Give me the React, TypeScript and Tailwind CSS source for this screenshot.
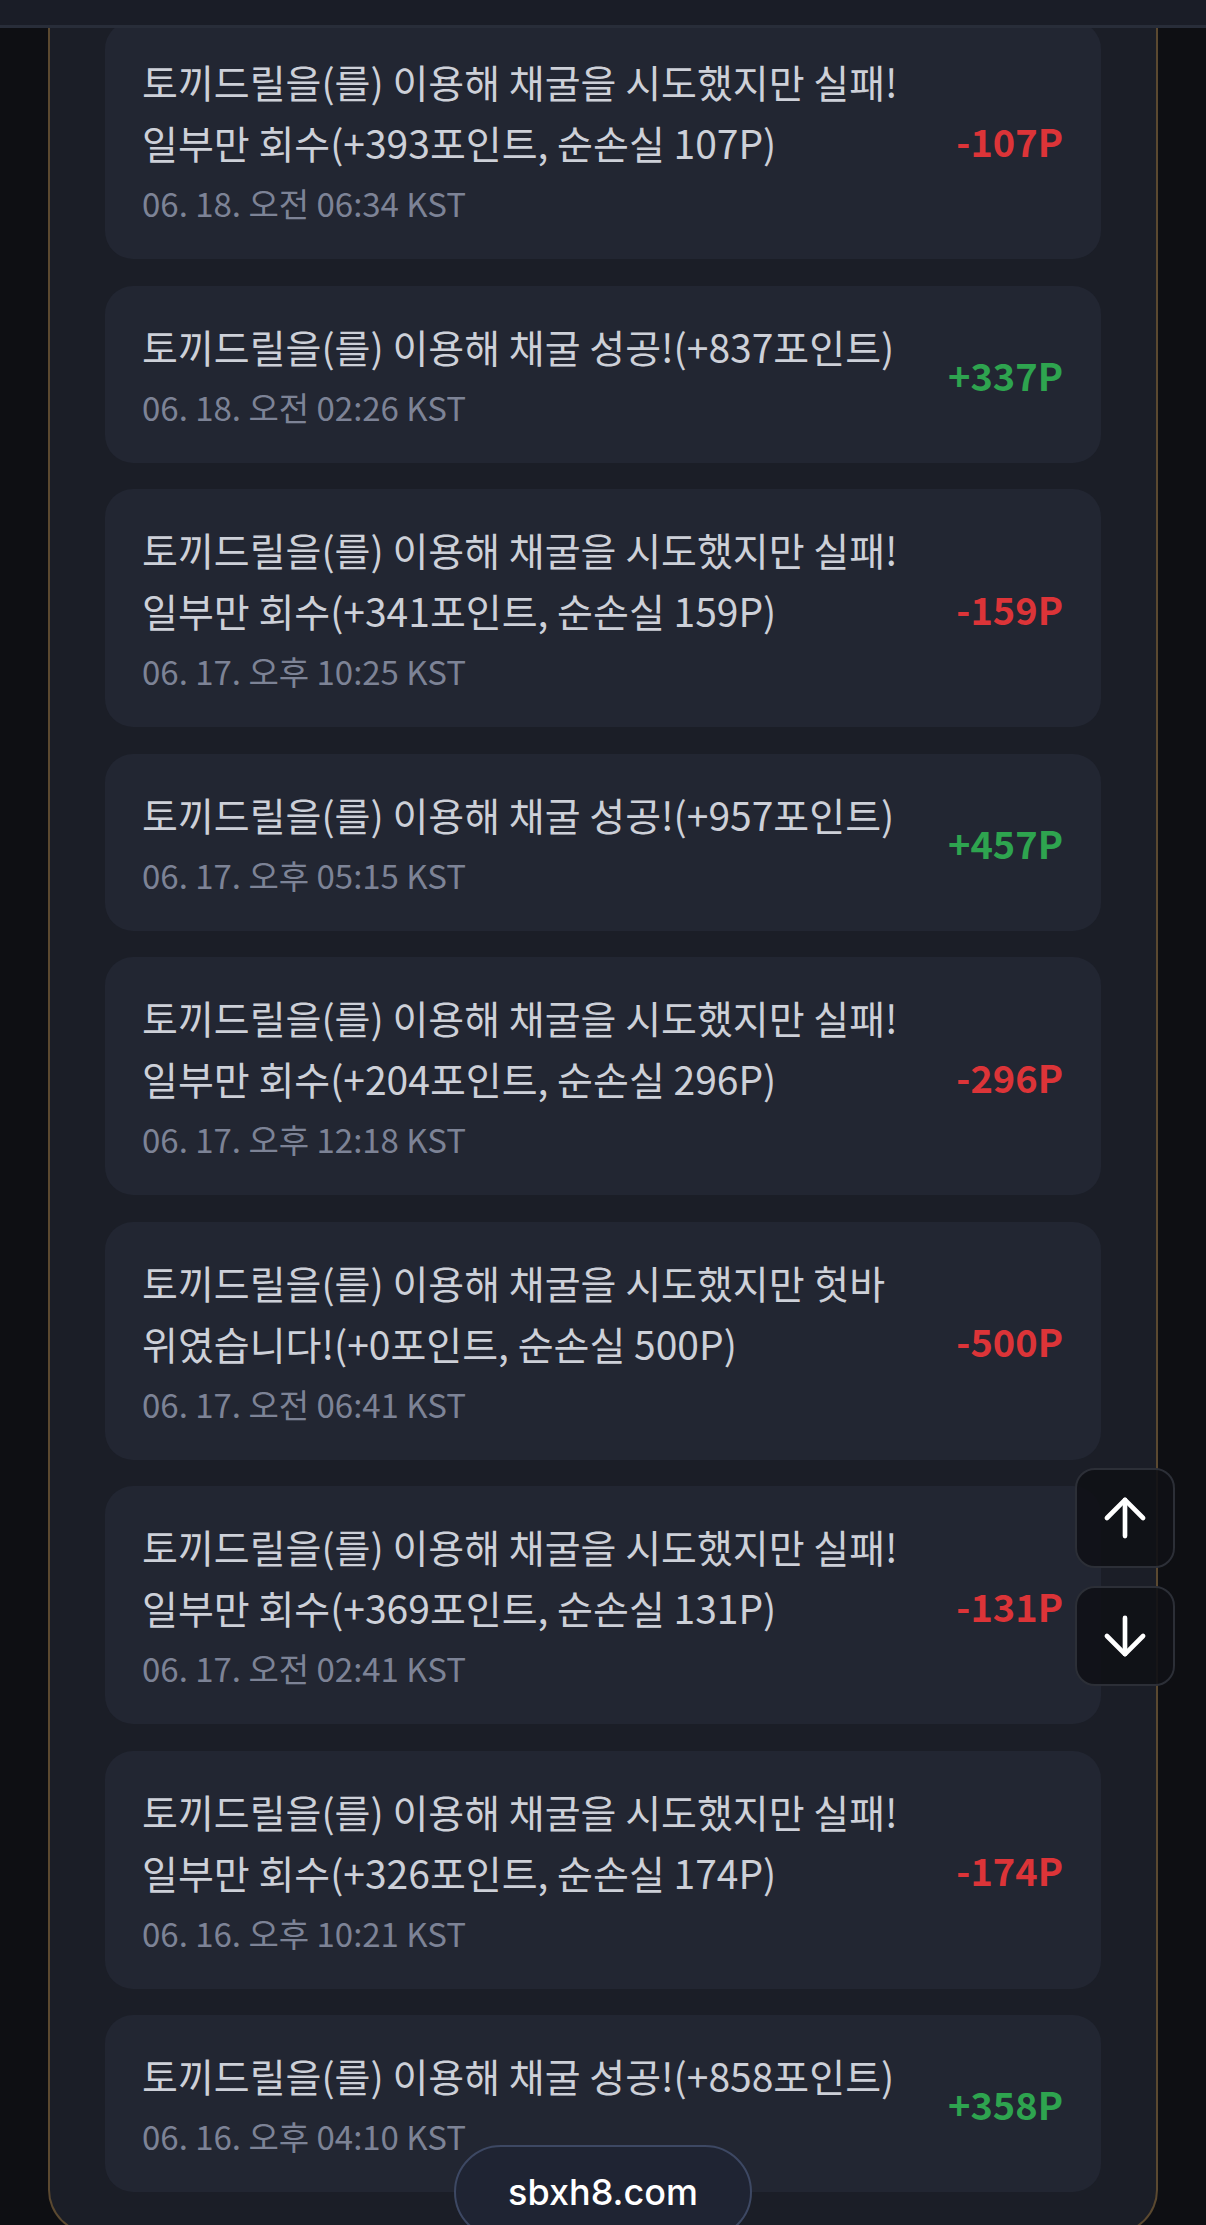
import React from 'react';
import { ArrowUp, ArrowDown } from 'lucide-react';

type Entry = {
  lines: string[];
  date: string;
  points: string;
  gain: boolean;
};

const entries: Entry[] = [
  {
    lines: ['토끼드릴을(를) 이용해 채굴을 시도했지만 실패!', '일부만 회수(+393포인트, 순손실 107P)'],
    date: '06. 18. 오전 06:34 KST',
    points: '-107P',
    gain: false,
  },
  {
    lines: ['토끼드릴을(를) 이용해 채굴 성공!(+837포인트)'],
    date: '06. 18. 오전 02:26 KST',
    points: '+337P',
    gain: true,
  },
  {
    lines: ['토끼드릴을(를) 이용해 채굴을 시도했지만 실패!', '일부만 회수(+341포인트, 순손실 159P)'],
    date: '06. 17. 오후 10:25 KST',
    points: '-159P',
    gain: false,
  },
  {
    lines: ['토끼드릴을(를) 이용해 채굴 성공!(+957포인트)'],
    date: '06. 17. 오후 05:15 KST',
    points: '+457P',
    gain: true,
  },
  {
    lines: ['토끼드릴을(를) 이용해 채굴을 시도했지만 실패!', '일부만 회수(+204포인트, 순손실 296P)'],
    date: '06. 17. 오후 12:18 KST',
    points: '-296P',
    gain: false,
  },
  {
    lines: ['토끼드릴을(를) 이용해 채굴을 시도했지만 헛바', '위였습니다!(+0포인트, 순손실 500P)'],
    date: '06. 17. 오전 06:41 KST',
    points: '-500P',
    gain: false,
  },
  {
    lines: ['토끼드릴을(를) 이용해 채굴을 시도했지만 실패!', '일부만 회수(+369포인트, 순손실 131P)'],
    date: '06. 17. 오전 02:41 KST',
    points: '-131P',
    gain: false,
  },
  {
    lines: ['토끼드릴을(를) 이용해 채굴을 시도했지만 실패!', '일부만 회수(+326포인트, 순손실 174P)'],
    date: '06. 16. 오후 10:21 KST',
    points: '-174P',
    gain: false,
  },
  {
    lines: ['토끼드릴을(를) 이용해 채굴 성공!(+858포인트)'],
    date: '06. 16. 오후 04:10 KST',
    points: '+358P',
    gain: true,
  },
];

const HistoryCard = ({ entry }: { entry: Entry }) => (
  <div className="flex items-center justify-between rounded-[28px] bg-[#222632] pl-[37px] pr-[38px] pt-[30px] pb-[30px]">
    <div className="flex flex-col">
      {entry.lines.map((line) => (
        <div key={line} className="whitespace-nowrap text-[39px] leading-[61px] text-[#cdd0d8]">
          {line}
        </div>
      ))}
      <div className="mt-[5px] text-[33px] leading-[51px] text-[#7d8396]">{entry.date}</div>
    </div>
    <div
      className={
        entry.gain
          ? 'text-[38px] font-bold text-[#2ea44f]'
          : 'text-[38px] font-bold text-[#dc3438]'
      }
    >
      {entry.points}
    </div>
  </div>
);

export default function App() {
  return (
    <div
      className="min-h-screen bg-[#0e0f13] px-[48px]"
      style={{ fontFamily: '"Noto Sans CJK KR", "Noto Sans", sans-serif' }}
    >
      {/* top bar stays over the list */}
      <div className="fixed top-0 left-0 right-0 z-20 h-[28px] border-b-[3px] border-[#282d39] bg-[#1a1d27]" />

      <div className="rounded-b-[44px] border-x-2 border-b-2 border-[#5b4930] bg-[#1b1e27] px-[55px] pt-[21px] pb-[40px]">
        <div className="flex flex-col gap-[26.5px]">
          {entries.map((entry) => (
            <HistoryCard key={entry.date} entry={entry} />
          ))}
        </div>
      </div>

      {/* scroll buttons */}
      <div className="fixed right-[31px] top-[1468px] z-10 flex flex-col gap-[18px]">
        <button className="flex h-[100px] w-[100px] items-center justify-center rounded-[20px] border-2 border-[#2c2f37] bg-[#0f1116]/90 text-white">
          <ArrowUp size={62} strokeWidth={1.8} />
        </button>
        <button className="flex h-[100px] w-[100px] items-center justify-center rounded-[20px] border-2 border-[#2c2f37] bg-[#0f1116]/90 text-white">
          <ArrowDown size={62} strokeWidth={1.8} />
        </button>
      </div>

      {/* site badge */}
      <div className="fixed bottom-[-14px] left-[454px] z-10 flex h-[94px] w-[298px] items-center justify-center rounded-full border-2 border-[#3d4863] bg-[#1f2433]">
        <span
          className="text-[36px] font-medium text-white"
          style={{ fontFamily: 'Inter, "Liberation Sans", sans-serif' }}
        >
          sbxh8.com
        </span>
      </div>
    </div>
  );
}
